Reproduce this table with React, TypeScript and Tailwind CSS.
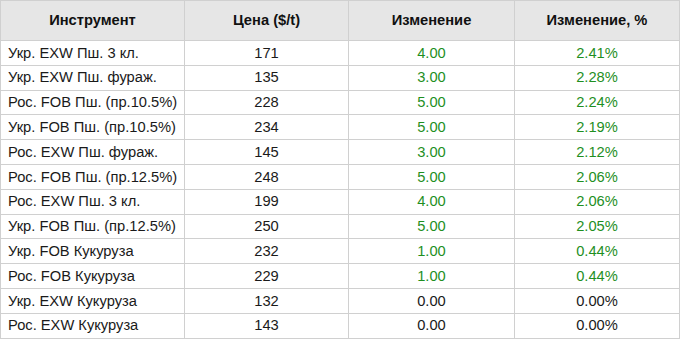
import React from 'react';

type Row = { name: string; price: number; change: string; pct: string };

const rows: Row[] = [
  { name: 'Укр. EXW Пш. 3 кл.', price: 171, change: '4.00', pct: '2.41%' },
  { name: 'Укр. EXW Пш. фураж.', price: 135, change: '3.00', pct: '2.28%' },
  { name: 'Рос. FOB Пш. (пр.10.5%)', price: 228, change: '5.00', pct: '2.24%' },
  { name: 'Укр. FOB Пш. (пр.10.5%)', price: 234, change: '5.00', pct: '2.19%' },
  { name: 'Рос. EXW Пш. фураж.', price: 145, change: '3.00', pct: '2.12%' },
  { name: 'Рос. FOB Пш. (пр.12.5%)', price: 248, change: '5.00', pct: '2.06%' },
  { name: 'Рос. EXW Пш. 3 кл.', price: 199, change: '4.00', pct: '2.06%' },
  { name: 'Укр. FOB Пш. (пр.12.5%)', price: 250, change: '5.00', pct: '2.05%' },
  { name: 'Укр. FOB Кукуруза', price: 232, change: '1.00', pct: '0.44%' },
  { name: 'Рос. FOB Кукуруза', price: 229, change: '1.00', pct: '0.44%' },
  { name: 'Укр. EXW Кукуруза', price: 132, change: '0.00', pct: '0.00%' },
  { name: 'Рос. EXW Кукуруза', price: 143, change: '0.00', pct: '0.00%' },
];

export default function App() {
  return (
    <div className="bg-white w-[680px] h-[340px] overflow-hidden font-['Liberation_Sans',Arial,sans-serif] text-[14.7px] text-[#1a1a1a]">
      <table className="w-[679px] table-fixed border-collapse border border-[#d0d0d0]">
        <colgroup>
          <col className="w-[184px]" />
          <col className="w-[164px]" />
          <col className="w-[166px]" />
          <col className="w-[165px]" />
        </colgroup>
        <thead>
          <tr className="h-[40px] bg-[#e6e6e6]">
            <th className="border border-[#d0d0d0] font-bold text-center text-[#111]">Инструмент</th>
            <th className="border border-[#d0d0d0] font-bold text-center text-[#111]">Цена ($/t)</th>
            <th className="border border-[#d0d0d0] font-bold text-center text-[#111]">Изменение</th>
            <th className="border border-[#d0d0d0] font-bold text-center text-[#111]">Изменение, %</th>
          </tr>
        </thead>
        <tbody>
          {rows.map((r) => {
            const up = r.change !== '0.00';
            return (
              <tr key={r.name} className="h-[24.8px] leading-none">
                <td className="border border-[#d0d0d0] pl-[7px] p-0 whitespace-nowrap">{r.name}</td>
                <td className="border border-[#d0d0d0] p-0 text-center">{r.price}</td>
                <td className={`border border-[#d0d0d0] p-0 text-center ${up ? 'text-[#1f8f1f]' : ''}`}>{r.change}</td>
                <td className={`border border-[#d0d0d0] p-0 text-center ${up ? 'text-[#1f8f1f]' : ''}`}>{r.pct}</td>
              </tr>
            );
          })}
        </tbody>
      </table>
    </div>
  );
}
